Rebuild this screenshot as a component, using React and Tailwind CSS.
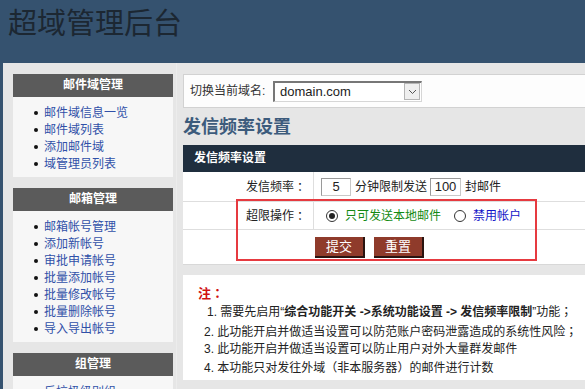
import React from "react";

const FONT = { fontFamily: "'Liberation Sans', 'Noto Sans CJK SC', sans-serif" };
const PUNCT = { fontFamily: "'Noto Sans CJK TC', sans-serif" };

const MENUS = [
  { title: "邮件域管理", items: ["邮件域信息一览", "邮件域列表", "添加邮件域", "域管理员列表"] },
  { title: "邮箱管理", items: ["邮箱帐号管理", "添加新帐号", "审批申请帐号", "批量添加帐号", "批量修改帐号", "批量删除帐号", "导入导出帐号"] },
  { title: "组管理", items: ["反垃圾级别组", "组列表"] },
];

function MenuBox({ title, items }) {
  return (
    <div className="w-[160px] mb-[11px]">
      <div className="h-[23px] bg-[#5b5b5b] text-white font-bold text-[12px] leading-[23px] text-center">{title}</div>
      <ul className="bg-[#f7f7f7] pt-[7px] pb-[5px] pl-[21px]">
        {items.map(t => (
          <li key={t} className="flex items-center h-[17px] text-[12px] text-[#3050a8]">
            <span className="w-[4px] h-[4px] rounded-full bg-[#111] mr-[6px] shrink-0" />
            <span>{t}</span>
          </li>
        ))}
      </ul>
    </div>
  );
}

function Radio({ checked }) {
  return (
    <span className="w-[12px] h-[12px] rounded-full border border-[#333] bg-white flex items-center justify-center shrink-0">
      {checked && <span className="w-[6px] h-[6px] rounded-full bg-[#222]" />}
    </span>
  );
}

function NumInput({ value, w }) {
  return (
    <span className={`${w} h-[18px] border border-[#c8c8c8] border-t-[#9a9a9a] border-l-[#9a9a9a] bg-white flex items-center justify-center text-[13px] text-[#222]`}>
      {value}
    </span>
  );
}

export default function App() {
  return (
    <div className="w-[585px] h-[389px] overflow-hidden bg-[#35526f] relative" style={FONT}>
      <div className="h-[63px] pl-[8px] pt-[6px] text-[29px] leading-[36px] text-[#1c2732]">超域管理后台</div>

      <div className="flex ml-[3px] h-[326px] bg-[#e6e6e6]">
        <div className="w-[174px] pl-[10px] pt-[11px] shrink-0 border-r border-[#ececec]">
          {MENUS.map(m => <MenuBox key={m.title} {...m} />)}
        </div>

        <div className="flex-1 pl-[6px] pt-[11px] min-w-0">
          <div className="h-[34px] bg-[#fdfdfd] border border-r-0 border-[#d2d2d2] flex items-center pl-[6px]">
            <span className="text-[12px] text-[#333] w-[83px]">切换当前域名:</span>
            <div className="w-[149px] h-[21px] bg-white border border-[#d6d6d6] border-t-[#777] border-l-[#777] border-t-2 border-l-2 flex items-center justify-between">
              <span className="pl-[5px] text-[13px] text-[#222]">domain.com</span>
              <span className="w-[16px] h-[17px] mr-[1px] bg-[#efefef] border border-[#b5b5b5] flex items-center justify-center">
                <svg width="9" height="6" viewBox="0 0 9 6"><path d="M1 1 L4.5 4.5 L8 1" fill="none" stroke="#555" strokeWidth="1" /></svg>
              </span>
            </div>
          </div>

          <div className="h-[37px] pt-[8px] text-[18px] leading-[22px] font-bold text-[#3c5b7c]">发信频率设置</div>

          <div className="h-[27px] bg-[#1f2e3e] text-white font-bold text-[12px] leading-[27px] pl-[11px]">发信频率设置</div>

          <div className="bg-white border-b border-[#d8d8d8] text-[12px] text-[#222]">
            <div className="flex h-[30px] border-b border-[#dedede]">
              <div className="w-[131px] border-r border-[#dedede] flex items-center justify-end pr-[7px]">发信频率<span style={PUNCT}>：</span></div>
              <div className="flex items-center pl-[7px]">
                <NumInput value="5" w="w-[30px]" />
                <span className="ml-[4px] mr-[3px]">分钟限制发送</span>
                <NumInput value="100" w="w-[31px]" />
                <span className="ml-[4px]">封邮件</span>
              </div>
            </div>
            <div className="flex h-[28px] border-b border-[#dedede]">
              <div className="w-[131px] border-r border-[#dedede] flex items-center justify-end pr-[7px]">超限操作<span style={PUNCT}>：</span></div>
              <div className="flex items-center pl-[12px]">
                <Radio checked />
                <span className="ml-[7px] text-[#138a13]">只可发送本地邮件</span>
                <span className="ml-[13px]"><Radio /></span>
                <span className="ml-[7px] text-[#1414c8]">禁用帐户</span>
              </div>
            </div>
            <div className="h-[34px] flex items-start pt-[7px] pl-[132px] gap-[9px]">
              <button className="w-[50px] h-[21px] bg-[#8f3b2b] text-white text-[13px] border-r-2 border-b-2 border-[#2a1410]">提交</button>
              <button className="w-[50px] h-[21px] bg-[#8f3b2b] text-white text-[13px] border-r-2 border-b-2 border-[#2a1410]">重置</button>
            </div>
          </div>

          <div className="mt-[10px] h-[105px] bg-white pt-[9px] pl-[15px] text-[12px] leading-[17.3px] text-[#222]">
            <div className="text-[#d01010] font-bold text-[13px]">注<span style={PUNCT}>：</span></div>
            <div className="pl-[9px]">1. 需要先启用“<b>综合功能开关 -&gt;系统功能设置 -&gt; 发信频率限制</b>”功能<span style={PUNCT}>；</span></div>
            <div className="pl-[6px]">2. 此功能开启并做适当设置可以防范账户密码泄露造成的系统性风险<span style={PUNCT}>；</span></div>
            <div className="pl-[6px]">3. 此功能开启并做适当设置可以防止用户对外大量群发邮件</div>
            <div className="pl-[6px]">4. 本功能只对发往外域<span style={PUNCT}>（</span>非本服务器<span style={PUNCT}>）</span>的邮件进行计数</div>
          </div>
        </div>
      </div>

      <div className="absolute left-[236px] top-[199px] w-[301px] h-[62px] border-2 border-[#e63a40] pointer-events-none" />
    </div>
  );
}
